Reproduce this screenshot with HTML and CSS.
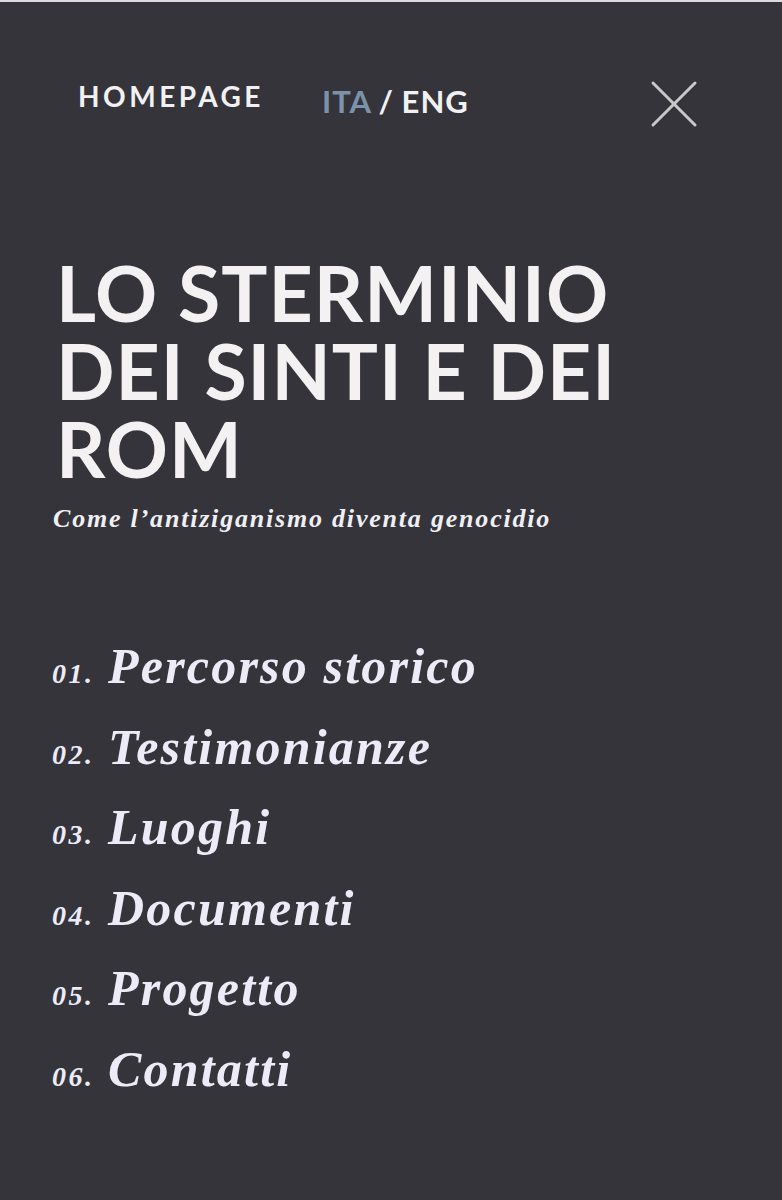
FILE: index.html
```html
<!DOCTYPE html>
<html lang="it">
<head>
	<meta charset="UTF-8">
	<title>Lo sterminio dei Sinti e dei Rom</title>
	<link rel="stylesheet" href="styles.css">
</head>
<body>
	<div class="menu">
		<div class="nav">
			<a class="nav-home" href="#">HOMEPAGE</a>
			<div class="nav-lang">
				<a class="lang-active" href="#">ITA</a> / <a href="#">ENG</a>
			</div>
			<a class="nav-close" href="#" aria-label="Chiudi">
				<svg width="48" height="48" viewBox="0 0 48 48">
					<line x1="3" y1="3" x2="45" y2="45" />
					<line x1="45" y1="3" x2="3" y2="45" />
				</svg>
			</a>
		</div>

		<h1 class="title">LO STERMINIO DEI SINTI E DEI ROM</h1>
		<p class="subtitle">Come l’antiziganismo diventa genocidio</p>

		<ul class="chapters">
			<li><span class="num">01.</span> <a href="#">Percorso storico</a></li>
			<li><span class="num">02.</span> <a href="#">Testimonianze</a></li>
			<li><span class="num">03.</span> <a href="#">Luoghi</a></li>
			<li><span class="num">04.</span> <a href="#">Documenti</a></li>
			<li><span class="num">05.</span> <a href="#">Progetto</a></li>
			<li><span class="num">06.</span> <a href="#">Contatti</a></li>
		</ul>
	</div>
</body>
</html>
```

FILE: styles.css
```css
body {
	margin: 0;
	background-color: #35343b;
}
a {
	color: inherit;
	text-decoration: none;
}
.menu {
	min-height: 1198px;
	border-top: 2px solid #dcdcdc;
	background-color: #35343b;
	padding: 0 84px 0 52px;
}

/* top bar */
.nav {
	display: flex;
	align-items: flex-start;
	height: 48px;
	padding-top: 76px;
	font-family: Lato, "Liberation Sans", sans-serif;
	font-weight: 700;
}
.nav-home {
	margin: 4px 0 0 26px;
	font-size: 28px;
	line-height: 28px;
	letter-spacing: 3.5px;
	color: #f2f1f1;
}
.nav-lang {
	margin: 8px 0 0 58px;
	font-size: 31px;
	line-height: 31px;
	letter-spacing: 1px;
	word-spacing: -1px;
	color: #f2f1f1;
}
.lang-active {
	color: #7b92ab;
}
.nav-close {
	margin-left: auto;
	margin-top: 2px;
}
.nav-close svg {
	display: block;
	stroke: #c9c9cb;
	stroke-width: 3;
	stroke-linecap: round;
}

/* heading */
.title {
	margin: 127px 0 0 4px;
	font-family: Lato, "Liberation Sans", sans-serif;
	font-weight: 700;
	font-size: 77px;
	line-height: 78px;
	letter-spacing: 1px;
	color: #f3f1f1;
	max-width: 620px;
}
.subtitle {
	margin: 17px 0 0 1px;
	font-family: "Liberation Serif", serif;
	font-style: italic;
	font-weight: 700;
	font-size: 26px;
	line-height: 30px;
	letter-spacing: 1.8px;
	color: #f0eff4;
}

/* chapter list */
.chapters {
	list-style: none;
	margin: 92px 0 0;
	padding: 0;
	font-family: "Liberation Serif", serif;
	font-style: italic;
	font-weight: 700;
	color: #ecebf7;
}
.chapters li {
	font-size: 50px;
	line-height: 80.6px;
}
.chapters .num {
	font-size: 28px;
	line-height: 1;
	letter-spacing: 2.5px;
	margin-right: 1px;
}
.chapters a {
	letter-spacing: 2.2px;
}
```
